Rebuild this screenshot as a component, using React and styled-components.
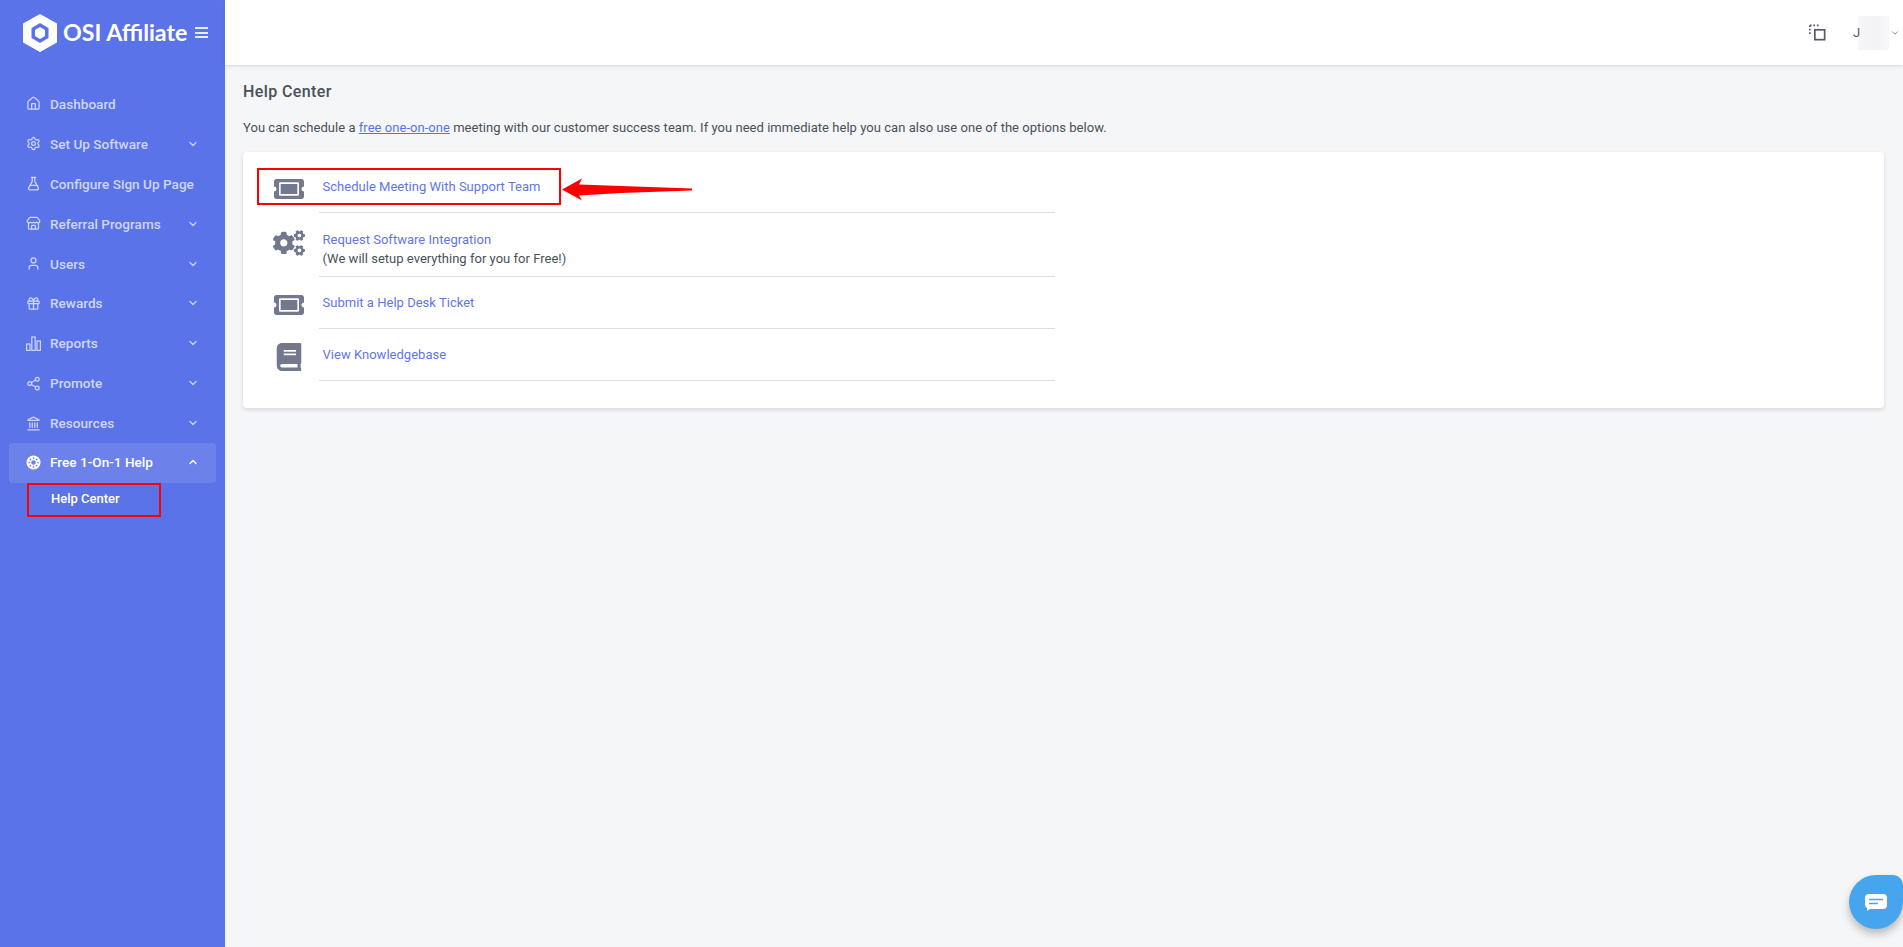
import React from "react";
import styled, { createGlobalStyle } from "styled-components";
import { FaTicketAlt, FaCogs, FaBook } from "react-icons/fa";
import { Home, Settings, FlaskConical, Store, User, Gift, Share2, Landmark, ChevronDown, ChevronUp } from "lucide-react";

const Global = createGlobalStyle`
  html, body { margin: 0; height: 100%; }
  body { font-family: "Roboto", "Liberation Sans", sans-serif; background: #f5f6f8; color: #495057; }
  * { box-sizing: border-box; }
`;

const Page = styled.div`display: flex; height: 947px; overflow: hidden; position: relative;`;
const Sidebar = styled.aside`width: 225px; flex: none; background: #5b73e8; display: flex; flex-direction: column;`;
const Brand = styled.div`height: 65px; flex: none; display: flex; align-items: center; padding: 0 15px 0 22px; color: #fff;`;
const BrandName = styled.span`font: 700 23.2px/1 "Lato", sans-serif; margin-left: 5px; white-space: nowrap;`;
const Burger = styled.span`display: flex; flex-direction: column; gap: 2.4px; margin-left: 8px;`;
const BurgerBar = styled.span`width: 13px; height: 2px; background: #e6eafc;`;
const Nav = styled.nav`padding: 19px 9px 0; display: flex; flex-direction: column;`;
const NavRow = styled.div`
  height: 39.9px; display: flex; align-items: center; padding: 0 17px ${p => (p.$active ? "1px" : "0")}; border-radius: 3px;
  color: ${p => (p.$active ? "#ffffff" : "#ced6fa")};
  background: ${p => (p.$active ? "#6c82ea" : "transparent")};
`;
const NavIcon = styled.span`width: 24px; flex: none; display: flex;`;
const NavLabel = styled.span`flex: 1; font-size: 13.6px; font-weight: 500; white-space: nowrap;`;
const SubItem = styled.div`
  position: relative; height: 34px; display: flex; align-items: center; padding: 0 0 3px 42px;
  color: #fff; font-size: 13px; font-weight: 500;
`;
const RedBox = styled.div`position: absolute; border: 2px solid #f00; pointer-events: none;`;
const SubBox = styled(RedBox)`left: 18px; top: 0; width: 134px; height: 34px;`;
const Main = styled.main`flex: 1; min-width: 0; display: flex; flex-direction: column;`;
const Topbar = styled.header`
  height: 65px; flex: none; background: #fff; box-shadow: 0 1px 3px rgba(18,38,63,.14);
  display: flex; align-items: center; justify-content: flex-end; padding-right: 3px; color: #555b6d; position: relative;
`;
const UserInitial = styled.span`position: relative; z-index: 1; font-size: 13px; margin: 0 -2px 0 27px; width: 7px;`;
const Blur = styled.span`width: 31px; height: 34px; background: linear-gradient(90deg,#f6f6f8,#f3f3f5 60%,#f8f8f9);`;
const UserChevron = styled.span`display: flex; margin-left: 1px; color: #74788d;`;
const Content = styled.div`padding: 0 19px 0 18px;`;
const Title = styled.h4`margin: 17px 0 0; font-size: 16px; letter-spacing: .4px; line-height: 20px; font-weight: 500; color: #495057;`;
const Intro = styled.p`margin: 16px 0 0; font-size: 13px; letter-spacing: .035px; line-height: 20px; color: #495057;`;
const IntroLink = styled.a`color: #5b73e8; text-decoration: underline;`;
const Card = styled.section`
  position: relative; margin-top: 14px; height: 256px; background: #fff; border-radius: 4px;
  box-shadow: 0 2px 4px rgba(15,34,58,.14); padding: 9px 0 0 16px;
`;
const Row = styled.div`display: flex; width: 796px;`;
const IconCell = styled.div`
  width: 60px; flex: none; display: flex; justify-content: center; color: #74788d; font-size: ${p => p.$size}px;
  padding-top: ${p => p.$top}px; padding-right: 1px;
`;
const TextCell = styled.div`
  flex: 1; border-bottom: 1px solid #dcdde0; padding: ${p => (p.$compact ? "17px" : "16px")} 4px ${p => (p.$compact ? "8px" : "16px")} 3.5px;
  font-size: 13px; line-height: 19px; letter-spacing: .02px; color: #495057;
`;
const RowLink = styled.a`display: block; color: #5f76ea;`;
const MainBox = styled(RedBox)`left: 14px; top: 16px; width: 304px; height: 37px;`;
const ArrowSvg = styled.svg`position: absolute; left: 318px; top: 25px;`;
const Chat = styled.div`
  position: absolute; left: 1849px; top: 875px; width: 54px; height: 54px; background: #47a5ee;
  border-radius: 50% 10px 50% 50%; box-shadow: 0 5px 8px rgba(0,0,0,.25); display: flex; align-items: center; justify-content: center;
`;

const Donut = (
  <svg width="15" height="15" viewBox="0 0 16 16"><path fill="currentColor" fillRule="evenodd" d="M8 .5a7.5 7.5 0 1 0 0 15 7.5 7.5 0 0 0 0-15zM8 5.500a2.500 2.500 0 1 1 0 5 2.500 2.500 0 0 1 0-5z" /><g fill="#6c82ea"><circle cx="8" cy="3.300" r=".9"/><circle cx="8" cy="12.700" r=".9"/><circle cx="3.300" cy="8" r=".9"/><circle cx="12.700" cy="8" r=".9"/><circle cx="4.700" cy="4.700" r=".9"/><circle cx="11.300" cy="4.700" r=".9"/><circle cx="4.700" cy="11.300" r=".9"/><circle cx="11.300" cy="11.300" r=".9"/></g></svg>
);
const Bars = (
  <svg width="15" height="15" viewBox="0 0 15 15" fill="none" stroke="currentColor" strokeWidth="1.2"><rect x=".6" y="8" width="3.400" height="6.400"/><rect x="5.800" y="1" width="3.400" height="13.400"/><rect x="11" y="5" width="3.400" height="9.400"/></svg>
);

const items = [
  ["Dashboard", <Home size={15} />, false],
  ["Set Up Software", <Settings size={15} />, true],
  ["Configure Sign Up Page", <FlaskConical size={15} />, false],
  ["Referral Programs", <Store size={15} />, true],
  ["Users", <User size={15} />, true],
  ["Rewards", <Gift size={15} />, true],
  ["Reports", Bars, true],
  ["Promote", <Share2 size={15} />, true],
  ["Resources", <Landmark size={15} />, true],
];

export default function App() {
  return (
    <Page>
      <Global />
      <Sidebar>
        <Brand>
          <svg width="36" height="38" viewBox="0 0 36 38">
            <path fill="#fff" fillRule="evenodd" d="M18 0l17 9.500v19L18 38 1 28.500v-19zM18 9l-8.500 5v10l8.500 5 8.500-5V14z" />
            <path fill="#fff" d="M18 13l5 3v6l-5 3-5-3v-6z" />
          </svg>
          <BrandName>OSI Affiliate</BrandName>
          <Burger><BurgerBar /><BurgerBar /><BurgerBar /></Burger>
        </Brand>
        <Nav>
          {items.map(([label, icon, more]) => (
            <NavRow key={label}>
              <NavIcon>{icon}</NavIcon>
              <NavLabel>{label}</NavLabel>
              {more && <ChevronDown size={12} strokeWidth={2.4} />}
            </NavRow>
          ))}
          <NavRow $active>
            <NavIcon>{Donut}</NavIcon>
            <NavLabel>Free 1-On-1 Help</NavLabel>
            <ChevronUp size={12} strokeWidth={2.6} />
          </NavRow>
          <SubItem>
            Help Center
            <SubBox />
          </SubItem>
        </Nav>
      </Sidebar>
      <Main>
        <Topbar>
          <svg width="17" height="17" viewBox="0 0 19 19" fill="none" stroke="#555b6d">
            <rect x="6.500" y="6.500" width="11" height="11" strokeWidth="1.900" />
            <path d="M1 1.500h11M1 1.500v10" strokeWidth="1.900" strokeDasharray="1.900 2" />
          </svg>
          <UserInitial>J</UserInitial>
          <Blur />
          <UserChevron><ChevronDown size={10} strokeWidth={2} /></UserChevron>
        </Topbar>
        <Content>
          <Title>Help Center</Title>
          <Intro>
            You can schedule a <IntroLink>free one-on-one</IntroLink> meeting with our customer success team. If you need immediate help you can also use one of the options below.
          </Intro>
          <Card>
            <Row>
              <IconCell $size={30} $top={13}><FaTicketAlt /></IconCell>
              <TextCell><RowLink>Schedule Meeting With Support Team</RowLink></TextCell>
            </Row>
            <Row>
              <IconCell $size={32} $top={14}><FaCogs /></IconCell>
              <TextCell $compact>
                <RowLink>Request Software Integration</RowLink>
                (We will setup everything for you for Free!)
              </TextCell>
            </Row>
            <Row>
              <IconCell $size={30} $top={13}><FaTicketAlt /></IconCell>
              <TextCell><RowLink>Submit a Help Desk Ticket</RowLink></TextCell>
            </Row>
            <Row>
              <IconCell $size={28} $top={14}><FaBook /></IconCell>
              <TextCell><RowLink>View Knowledgebase</RowLink></TextCell>
            </Row>
            <MainBox />
            <ArrowSvg width="132" height="26" viewBox="0 0 132 26">
              <path fill="#f00" d="M1 12.500L21 1.500 18 7.500 60 9 131 11.500V13.500L60 16 18 18.500 21 23.500z" />
            </ArrowSvg>
          </Card>
        </Content>
      </Main>
      <Chat>
        <svg width="22" height="17" viewBox="0 0 22 17">
          <path fill="#fff" d="M4 0h14a4 4 0 0 1 4 4v7a4 4 0 0 1-4 4H5l-3 2v-3a4 4 0 0 1-2-3V4a4 4 0 0 1 4-4z" />
          <path stroke="#47a5ee" strokeWidth="1.500" d="M4 5.500h14M4 9.500h9" />
        </svg>
      </Chat>
    </Page>
  );
}
